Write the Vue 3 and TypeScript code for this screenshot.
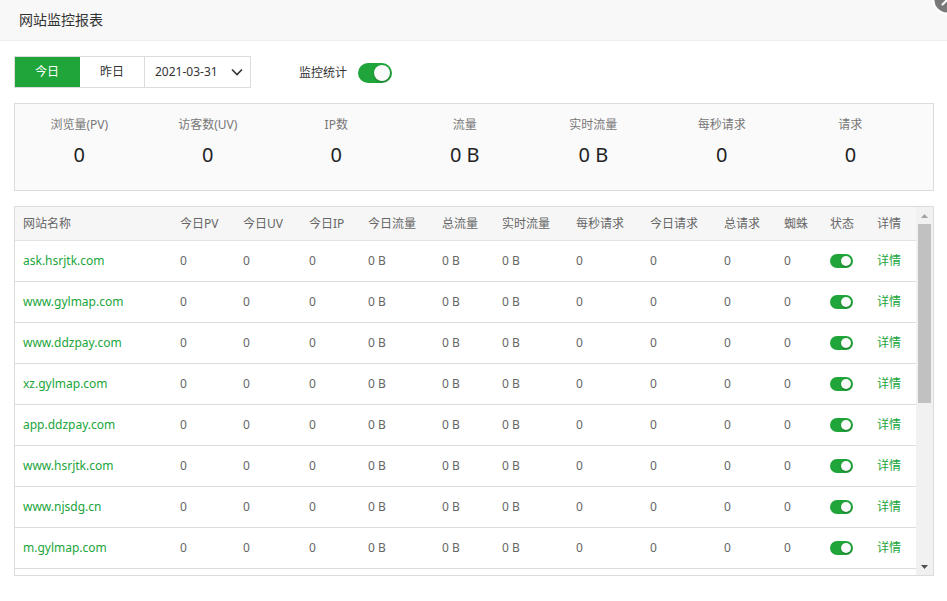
<script setup lang="ts">
import { ref } from 'vue'

interface Stat {
  label: string
  value: string
}

interface Column {
  title: string
  width: number | null
  value: string
}

interface Site {
  name: string
  enabled: boolean
}

const day = ref<'today' | 'yesterday'>('today')
const date = ref('2021-03-31')
const monitoring = ref(true)

const stats: Stat[] = [
  { label: '浏览量(PV)', value: '0' },
  { label: '访客数(UV)', value: '0' },
  { label: 'IP数', value: '0' },
  { label: '流量', value: '0 B' },
  { label: '实时流量', value: '0 B' },
  { label: '每秒请求', value: '0' },
  { label: '请求', value: '0' },
]

const metrics: Column[] = [
  { title: '今日PV', width: 63, value: '0' },
  { title: '今日UV', width: 66, value: '0' },
  { title: '今日IP', width: 59, value: '0' },
  { title: '今日流量', width: 74, value: '0 B' },
  { title: '总流量', width: 60, value: '0 B' },
  { title: '实时流量', width: 74, value: '0 B' },
  { title: '每秒请求', width: 74, value: '0' },
  { title: '今日请求', width: 74, value: '0' },
  { title: '总请求', width: 60, value: '0' },
  { title: '蜘蛛', width: 46, value: '0' },
]

const columns: Column[] = [
  { title: '网站名称', width: null, value: '' },
  ...metrics,
  { title: '状态', width: 47, value: '' },
  { title: '详情', width: 47, value: '' },
]

const sites = ref<Site[]>(
  [
    'ask.hsrjtk.com',
    'www.gylmap.com',
    'www.ddzpay.com',
    'xz.gylmap.com',
    'app.ddzpay.com',
    'www.hsrjtk.com',
    'www.njsdg.cn',
    'm.gylmap.com',
  ].map((name) => ({ name, enabled: true })),
)
</script>

<template>
  <div class="dialog">
    <header class="title-bar">
      <h1>网站监控报表</h1>
      <button class="close" type="button">
        <svg viewBox="0 0 30 30" width="30" height="30">
          <circle cx="15" cy="15" r="15" fill="#fff" />
          <circle cx="15" cy="15" r="12.5" fill="#787878" />
          <path d="M10.500 19.500L19.500 10.500M10.500 10.500L19.500 19.500" stroke="#fff" stroke-width="2" stroke-linecap="round" />
        </svg>
      </button>
    </header>

    <main>
      <div class="toolbar">
        <div class="range">
          <button type="button" :class="{ active: day === 'today' }" @click="day = 'today'">今日</button>
          <button type="button" :class="{ active: day === 'yesterday' }" @click="day = 'yesterday'">昨日</button>
          <div class="date">
            <select v-model="date">
              <option>2021-03-31</option>
            </select>
            <svg viewBox="0 0 12 8" width="12" height="8">
              <path d="M1 1.500L6 6.500L11 1.500" fill="none" stroke="#333" stroke-width="1.600" />
            </svg>
          </div>
        </div>
        <label class="monitor">
          <span>监控统计</span>
          <input v-model="monitoring" class="switch large" type="checkbox" />
        </label>
      </div>

      <dl class="stats">
        <div v-for="stat in stats" :key="stat.label">
          <dt>{{ stat.label }}</dt>
          <dd>{{ stat.value }}</dd>
        </div>
      </dl>

      <div class="table-box">
        <div class="table-view">
          <table>
            <colgroup>
              <col v-for="c in columns" :key="c.title" :style="c.width ? { width: c.width + 'px' } : undefined" />
            </colgroup>
            <thead>
              <tr>
                <th v-for="c in columns" :key="c.title" scope="col">{{ c.title }}</th>
              </tr>
            </thead>
            <tbody>
              <tr v-for="(site, i) in sites" :key="site.name">
                <td><a :id="`site-${i}`" href="#">{{ site.name }}</a></td>
                <td v-for="m in metrics" :key="m.title">{{ m.value }}</td>
                <td><input v-model="site.enabled" class="switch" type="checkbox" :aria-labelledby="`site-${i}`" /></td>
                <td><a href="#">详情</a></td>
              </tr>
            </tbody>
          </table>
        </div>
        <div class="scrollbar" aria-hidden="true">
          <svg viewBox="0 0 17 17" width="17" height="17"><path d="M5 11L8.500 7L12 11Z" fill="#a3a3a3" /></svg>
          <div class="track"><div class="thumb"></div></div>
          <svg viewBox="0 0 17 17" width="17" height="17"><path d="M5 7L8.500 11L12 7Z" fill="#505050" /></svg>
        </div>
      </div>
    </main>
  </div>
</template>

<style>
body {
  margin: 0;
  background: #fff;
}
</style>

<style scoped>
.dialog {
  position: relative;
  overflow: hidden;
  font-family: "Noto Sans", "Noto Sans CJK SC", sans-serif;
  font-size: 12px;
  line-height: 18px;
  color: #333;
}

button,
select {
  font: inherit;
  color: inherit;
}

.title-bar {
  height: 40px;
  padding: 0 19px;
  border-bottom: 1px solid #eee;
  background: #f8f8f8;
}

h1 {
  margin: 0;
  font-size: 14px;
  font-weight: 400;
  line-height: 40px;
}

.close {
  position: absolute;
  top: -15px;
  right: -15px;
  padding: 0;
  border: 0;
  background: none;
  cursor: pointer;
}

.close svg {
  display: block;
}

main {
  display: flex;
  flex-direction: column;
  padding: 15px 13px 24px 14px;
}

.toolbar {
  display: flex;
  align-items: center;
  gap: 48px;
  margin-bottom: 15px;
}

.range {
  display: flex;
  border: 1px solid #dcdcdc;
}

.range button {
  box-sizing: border-box;
  width: 65px;
  height: 30px;
  padding: 0;
  border: 0;
  border-right: 1px solid #dcdcdc;
  background: #fff;
  cursor: pointer;
}

.range button.active {
  border-color: #20a53a;
  background: #20a53a;
  color: #fff;
}

.date {
  display: grid;
  align-items: center;
}

.date select,
.date svg {
  grid-area: 1 / 1;
}

.date select {
  width: 105px;
  height: 30px;
  padding: 0 10px;
  border: 0;
  background: #fff;
  appearance: none;
}

.date svg {
  justify-self: end;
  margin-right: 7px;
  pointer-events: none;
}

.monitor {
  display: flex;
  align-items: center;
  gap: 11px;
  padding-top: 2px;
}

.switch {
  display: block;
  display: flex;
  justify-content: flex-start;
  box-sizing: border-box;
  width: 23px;
  height: 14px;
  margin: 0;
  padding: 2px;
  border-radius: 10px;
  background: #ccc;
  appearance: none;
  cursor: pointer;
}

.switch::before {
  content: "";
  height: 100%;
  aspect-ratio: 1;
  border-radius: 50%;
  background: #fafafa;
  box-shadow: 0 1px 2px rgba(0, 0, 0, 0.3);
}

.switch:checked {
  justify-content: flex-end;
  background: #20a53a;
}

.switch.large {
  width: 34px;
  height: 20px;
}

.stats {
  display: flex;
  margin: 0 0 15px;
  padding: 12px 0 22px;
  border: 1px solid #dcdcdc;
  background: #fafafa;
}

.stats div {
  width: 14%;
  text-align: center;
}

.stats dt {
  color: #777;
}

.stats dd {
  margin: 8px 0 0;
  font-size: 20px;
  line-height: 26px;
  color: #222;
}

.table-box {
  display: flex;
  border: 1px solid #dcdcdc;
}

.table-view {
  flex: 1;
  min-width: 0;
  padding-bottom: 6px;
}

table {
  width: 100%;
  table-layout: fixed;
  border-collapse: separate;
  border-spacing: 0;
  color: #666;
}

th,
td {
  box-sizing: border-box;
  padding: 0 0 0 8px;
  border-bottom: 1px solid #dcdcdc;
  text-align: left;
  font-weight: 400;
  white-space: nowrap;
}

th {
  height: 34px;
  border-color: #e4e4e4;
  background: #f6f6f6;
}

td {
  height: 41px;
}

a {
  color: #20a53a;
  text-decoration: none;
}

.scrollbar {
  display: flex;
  flex-direction: column;
  width: 17px;
  background: #f1f1f1;
}

.scrollbar svg {
  display: block;
}

.track {
  flex: 1;
  padding: 0 2px;
}

.thumb {
  height: 53.5%;
  background: #c1c1c1;
}
</style>
